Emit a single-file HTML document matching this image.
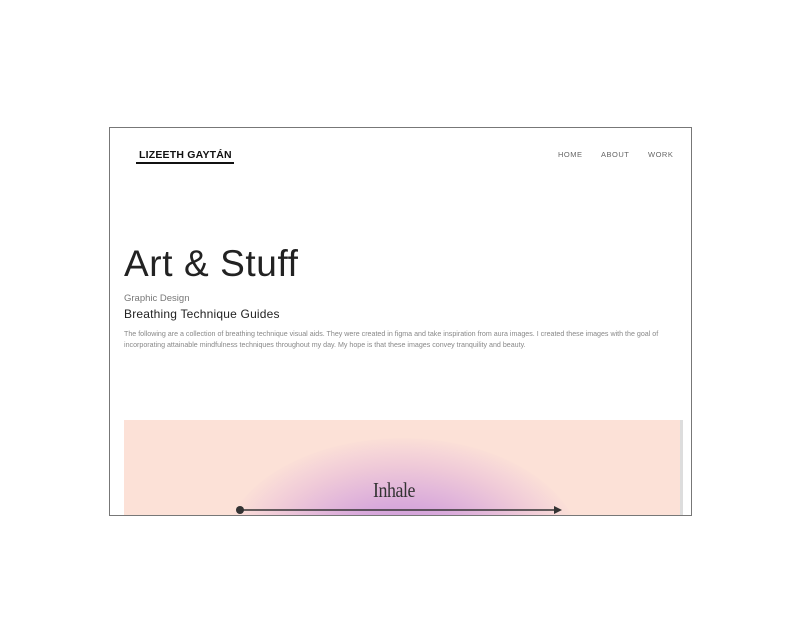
<!DOCTYPE html>
<html><head><style>
html,body{margin:0;padding:0;background:#fff;width:800px;height:642px;overflow:hidden;font-family:"Liberation Sans",sans-serif}
.frame{position:absolute;left:109px;top:127px;width:581px;height:387px;border:1px solid #777;overflow:hidden;background:#fff}
.logo{position:absolute;left:26px;top:21px;font-size:10.5px;font-weight:bold;color:#111;letter-spacing:.2px;padding:0 2px 1px 3px;border-bottom:2px solid #111;white-space:nowrap}
.nav{position:absolute;top:22px;font-size:7.5px;color:#666;letter-spacing:.5px}
h1{position:absolute;left:14px;top:115px;margin:0;font-weight:normal;font-size:37px;color:#222;letter-spacing:.6px}
.gd{position:absolute;left:14px;top:165px;font-size:9.5px;color:#777}
.bt{position:absolute;left:14px;top:179px;font-size:12px;color:#222;letter-spacing:.2px}
.p{position:absolute;left:14px;top:201px;width:545px;font-size:7.1px;line-height:10.5px;color:#888;white-space:nowrap}
.box{position:absolute;left:14px;top:292px;width:556px;height:100px;background:#fce1d7;overflow:hidden}
.strip{position:absolute;left:570px;top:292px;width:3px;height:100px;background:#ddd}
.glow{position:absolute;left:98px;top:18px;width:360px;height:230px;border-radius:50%;background:radial-gradient(ellipse at 50% 50%,#c18fd8 0%,#d9aadb 30%,#f0cbd8 55%,rgba(252,225,215,0) 72%)}
.inh{position:absolute;left:0;width:540px;top:58px;text-align:center;font-family:"Liberation Serif",serif;font-size:21px;color:#333;letter-spacing:-.5px;transform:scaleX(.85)}
</style></head><body>
<div class="frame">
<div class="logo">LIZEETH GAYTÁN</div>
<div class="nav" style="left:448px">HOME</div>
<div class="nav" style="left:491px">ABOUT</div>
<div class="nav" style="left:538px">WORK</div>
<h1>Art &amp; Stuff</h1>
<div class="gd">Graphic Design</div>
<div class="bt">Breathing Technique Guides</div>
<div class="p">The following are a collection of breathing technique visual aids. They were created in figma and take inspiration from aura images. I created these images with the goal of<br>incorporating attainable mindfulness techniques throughout my day. My hope is that these images convey tranquility and beauty.</div>
<div class="box"><div class="glow"></div><div class="inh">Inhale</div>
<svg style="position:absolute;left:0;top:0" width="556" height="100"><circle cx="116" cy="90" r="4" fill="#333"/><line x1="116" y1="90" x2="432" y2="90" stroke="#333" stroke-width="1.6"/><path d="M430 86 L438 90 L430 94Z" fill="#333"/></svg>
</div>
<div class="strip"></div>
</div>
</body></html>
